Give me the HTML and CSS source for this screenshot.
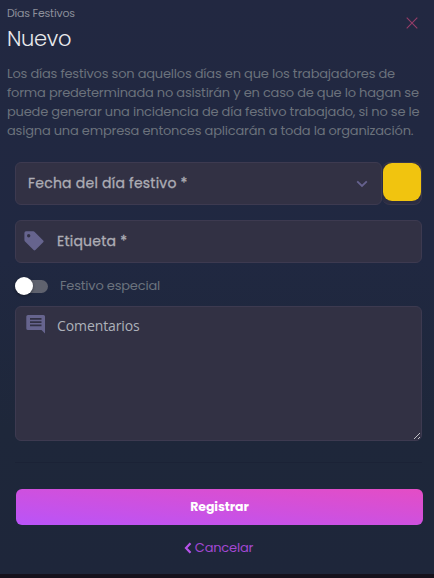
FILE: index.html
```html
<!DOCTYPE html>
<html lang="es">
<head>
<meta charset="UTF-8">
<meta name="viewport" content="width=device-width, initial-scale=1.0">
<title>Días Festivos</title>
<link rel="stylesheet" href="styles.css">
</head>
<body>
<div class="panel">
    <div class="header">
        <div>
            <div class="subtitle">Días Festivos</div>
            <h1>Nuevo</h1>
        </div>
        <svg class="close" width="12" height="12" viewBox="0 0 12 12"><path d="M.7.7l10.6 10.6M11.3.7L.7 11.3"/></svg>
    </div>
    <p class="description">
        Los días festivos son aquellos días en que los trabajadores de<br>
        forma predeterminada no asistirán y en caso de que lo hagan se<br>
        puede generar una incidencia de día festivo trabajado, si no se le<br>
        asigna una empresa entonces aplicarán a toda la organización.
    </p>

    <form class="form">
        <div class="row">
            <div class="field date">
                <span class="label-date">Fecha del día festivo *</span>
                <svg class="chevron" width="12" height="8" viewBox="0 0 12 8"><path d="M1.2 1.3L6 6l4.800-4.700"/></svg>
            </div>
            <div class="color-box"><div class="color"></div></div>
        </div>

        <div class="field tag">
            <svg class="icon" width="20" height="20" viewBox="0 0 20 20"><path fill-rule="evenodd" d="M2 .3h7.200q.9 0 1.500.6l8.500 8.500q.9.900 0 1.800l-7.800 7.800q-.9.900-1.800 0L1 10.400Q.4 9.800.4 9V2Q.4.300 2 .3zM4.700 3a1.700 1.700 0 1 0 0 3.400 1.700 1.700 0 0 0 0-3.400z"/></svg>
            <span class="label-tag">Etiqueta *</span>
        </div>

        <div class="switch-row">
            <div class="switch"><div class="knob"></div></div>
            <span class="label-switch">Festivo especial</span>
        </div>

        <div class="field comments">
            <svg class="icon" width="20" height="19" viewBox="0 0 20 19"><path fill-rule="evenodd" d="M2 0h15.500q1.500 0 1.500 1.500V18.500L15.500 15H2Q.3 15 .3 13.500v-12Q.3 0 2 0zM4 3v1.800h11.500V3zM4 6.200v1.800h11.500V6.200zM4 9.400v1.800h11.500V9.400z"/></svg>
            <span class="label-comments">Comentarios</span>
            <svg class="grip" width="8" height="8" viewBox="0 0 8 8"><path d="M1 7L7 1M5 7L7 5"/></svg>
        </div>

        <hr>
    </form>

    <div class="actions">
        <button type="button" class="submit">Registrar</button>
        <a class="cancel">
            <svg width="8" height="12" viewBox="0 0 8 12"><path d="M6.500 1.200L2 6l4.500 4.800"/></svg>
            <span>Cancelar</span>
        </a>
    </div>
</div>
</body>
</html>
```

FILE: styles.css
```css
* {
    box-sizing: border-box;
}

body {
    margin: 0;
    height: 578px;
    overflow: hidden;
    background: #15111b;
    font-family: Poppins, Inter, sans-serif;
    font-size: 13px;
    letter-spacing: -0.2px;
}

.panel {
    height: 574px;
    background: linear-gradient(#222841 0%, #202841 45%, #1e273a 75%, #1e263a 100%);
}

.header {
    display: flex;
    justify-content: space-between;
    height: 64px;
    padding: 5px 16px 0 7px;
}

.subtitle {
    font-size: 11px;
    line-height: 16px;
    color: #8d909b;
}

h1 {
    margin: 3px 0 0;
    font-size: 21px;
    line-height: 30px;
    font-weight: 300;
    letter-spacing: -0.3px;
    color: #e8e9ec;
}

.close {
    margin-top: 12px;
    fill: none;
    stroke: #963d68;
    stroke-width: 1.1;
}

.description {
    margin: 0;
    padding-left: 7px;
    line-height: 19px;
    white-space: nowrap;
    color: #6b727c;
}

.form {
    padding: 22px 12px 0 15px;
}

.row {
    display: flex;
}

.field {
    display: flex;
    align-items: center;
    height: 43px;
    background: #323144;
    border: 1px solid #3d3a50;
    border-radius: 6px;
    font-size: 14px;
    letter-spacing: 0.23px;
    color: #adadb5;
}

.label-date,
.label-tag {
    -webkit-text-stroke: 0.3px #adadb5;
}

.date {
    flex: 1;
    justify-content: space-between;
    padding: 0 13px 0 12px;
}

.chevron {
    fill: none;
    stroke: #66628f;
    stroke-width: 1.8;
}

.color-box {
    width: 40px;
    height: 43px;
    border: 1px solid #38374c;
    border-left: 0;
    border-radius: 8px;
    background: #2c2d42;
}

.color {
    width: 38px;
    height: 38px;
    margin-left: 1px;
    border-radius: 9px;
    background: #f1c40f;
}

.tag {
    margin-top: 15px;
    padding-left: 8px;
}

.icon {
    flex: none;
    fill: #66648e;
}

.tag .icon {
    margin-bottom: 1px;
}

.label-tag {
    margin-left: 13px;
}

.switch-row {
    display: flex;
    align-items: center;
    height: 43px;
    padding-top: 3px;
    color: #6b737e;
}

.switch {
    display: flex;
    align-items: center;
    width: 33px;
    height: 13px;
    border-radius: 7px;
    background: #5f626e;
}

.knob {
    width: 18px;
    height: 18px;
    flex: none;
    border-radius: 50%;
    background: #fff;
    box-shadow: 0 1px 3px rgba(0, 0, 0, 0.4);
}

.label-switch {
    margin-left: 12px;
}

.comments {
    position: relative;
    align-items: flex-start;
    height: 135px;
    padding: 8px 0 0 10px;
    font-family: "Open Sans", "Noto Sans", sans-serif;
    letter-spacing: -0.1px;
    color: #adb1ba;
}

.label-comments {
    margin-left: 11px;
    line-height: 22px;
}

.grip {
    position: absolute;
    right: 0;
    bottom: 0;
    fill: none;
    stroke: #d0d0d4;
    stroke-width: 0.9;
}

hr {
    height: 1px;
    margin: 21px 0 0;
    border: 0;
    background: #1b2236;
}

.actions {
    display: flex;
    flex-direction: column;
    align-items: center;
    padding: 26px 11px 0 16px;
}

.submit {
    width: 100%;
    height: 36px;
    padding: 0;
    border: 0;
    border-radius: 6px;
    background: linear-gradient(to top right, #b954f8, #e44dc5);
    font-family: inherit;
    font-size: 12.5px;
    font-weight: 700;
    letter-spacing: -0.1px;
    color: #fff;
}

.cancel {
    display: flex;
    align-items: center;
    gap: 3px;
    margin-top: 13px;
    padding-right: 2px;
    line-height: 20px;
    color: #a348d3;
}

.cancel svg {
    fill: none;
    stroke: #b752ea;
    stroke-width: 2.2;
}
```
